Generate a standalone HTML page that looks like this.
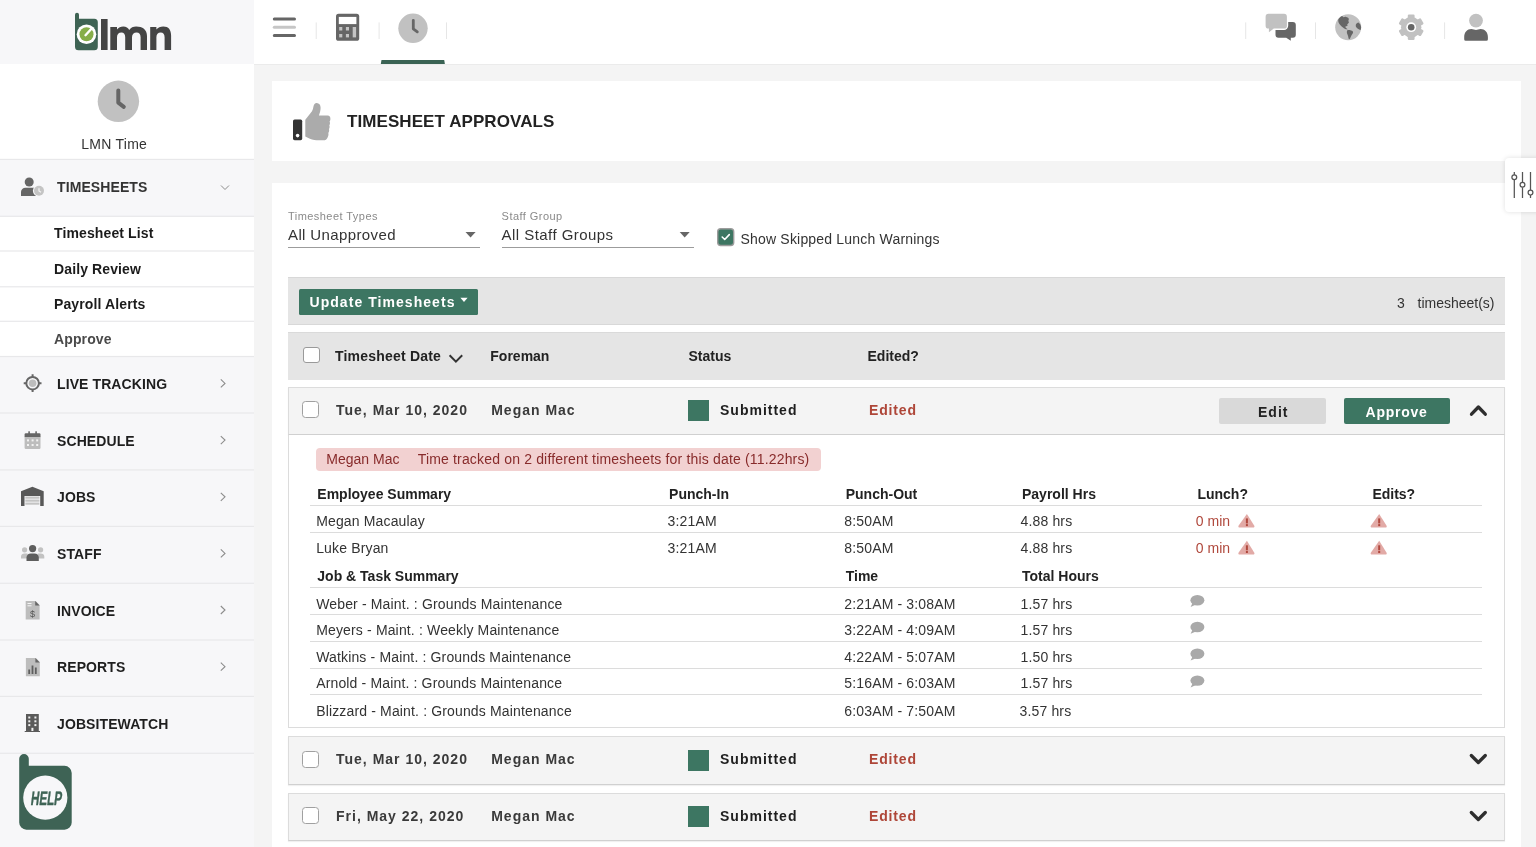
<!DOCTYPE html>
<html><head><meta charset="utf-8">
<style>
*{box-sizing:border-box;margin:0;padding:0}
html,body{width:1536px;height:847px;overflow:hidden;}
body{will-change:transform;background:#f4f4f4;font-family:"Liberation Sans",sans-serif;color:#333}
.a{position:absolute}
.t{position:absolute;white-space:nowrap;font-size:14px;line-height:16px}
.b{font-weight:bold}
#side{position:absolute;left:0;top:0;width:254px;height:847px;background:#f7f7f9}
.hr{position:absolute;left:0;width:255px;height:1px;background:#e6e6e8}
.nav{position:absolute;left:57px;font-size:14px;line-height:16px;font-weight:bold;color:#1e1e1e;white-space:nowrap;letter-spacing:0.1px}
.chev{position:absolute;left:219px;width:6px;height:6px;border-right:1.3px solid #9a9a9a;border-top:1.3px solid #9a9a9a;transform:rotate(45deg)}
.sub{position:absolute;left:54px;font-size:14px;line-height:16px;font-weight:bold;color:#1b1b1b;white-space:nowrap;letter-spacing:0.12px}
</style></head>
<body>
<!-- SIDEBAR -->
<div id="side">
  <div class="a" style="left:0;top:64px;width:254px;height:96px;background:#fff"></div>
  <div class="a" style="left:0;top:216px;width:254px;height:141px;background:#fff"></div>
  <svg class="a" style="left:0;top:0" width="255" height="847" viewBox="0 0 255 847">
    <!-- logo -->
    <path d="M77 12.8 a2 2 0 0 1 2 2 V18.7 H94.3 a3.5 3.5 0 0 1 3.5 3.5 V46.7 a3.5 3.5 0 0 1 -3.5 3.5 H78.5 a3.5 3.5 0 0 1 -3.5 -3.5 V14.8 a2 2 0 0 1 2 -2 Z" fill="#3e6354"/>
    <circle cx="86.5" cy="34.3" r="9.8" fill="#fff"/>
    <circle cx="86.5" cy="34.3" r="7" fill="#86ae4a"/>
    <path d="M85.5 35.2 L91.2 29" stroke="#fff" stroke-width="2.4" stroke-linecap="round"/>
    <rect x="101" y="19" width="6.6" height="31" fill="#444"/>
    <path d="M110.3 50 V27 H117 V29.6 C118.6 27.6 120.6 26.5 123.3 26.5 C126.2 26.5 128.1 28 129.2 30 C130.8 27.6 133.2 26.5 136.2 26.5 C142.5 26.5 147 29.5 147 36 V50 H140.6 V37.2 C140.6 34 139.2 32.4 136.6 32.4 C133.8 32.4 132 34.2 132 37.2 V50 H125.2 V37.2 C125.2 34 123.9 32.4 121.4 32.4 C118.7 32.4 117 34.2 117 37.2 V50 Z" fill="#444"/>
    <path d="M150.2 50 V27 H156.4 V29.6 C158 27.6 160.4 26.5 163.3 26.5 C168.6 26.5 171.1 29.8 171.1 35.5 V50 H164.6 V37.2 C164.6 34 163.2 32.4 160.7 32.4 C158 32.4 156.4 34.2 156.4 37.2 V50 Z" fill="#444"/>
    <!-- clock -->
    <circle cx="118.4" cy="101.3" r="20.7" fill="#c1c1c1"/>
    <path d="M118.3 90.5 V102.6 L123.8 106.8" stroke="#666" stroke-width="4" stroke-linecap="round" stroke-linejoin="round" fill="none"/>
    <!-- separators -->
    <rect x="0" y="158.8" width="254" height="1.2" fill="#e8e8ea"/>
    <rect x="0" y="215.7" width="254" height="1.2" fill="#e8e8ea"/>
    <rect x="0" y="250.4" width="254" height="1.2" fill="#e8e8ea"/>
    <rect x="0" y="286.2" width="254" height="1.2" fill="#e8e8ea"/>
    <rect x="0" y="320.7" width="254" height="1.2" fill="#e8e8ea"/>
    <rect x="0" y="355.9" width="254" height="1.2" fill="#e8e8ea"/>
    <rect x="0" y="412.4" width="254" height="1.2" fill="#e8e8ea"/>
    <rect x="0" y="469.3" width="254" height="1.2" fill="#e8e8ea"/>
    <rect x="0" y="525.8" width="254" height="1.2" fill="#e8e8ea"/>
    <rect x="0" y="582.7" width="254" height="1.2" fill="#e8e8ea"/>
    <rect x="0" y="639.4" width="254" height="1.2" fill="#e8e8ea"/>
    <rect x="0" y="695.8" width="254" height="1.2" fill="#e8e8ea"/>
    <rect x="0" y="752.7" width="254" height="1.2" fill="#e8e8ea"/>
    <!-- timesheets icon -->
    <circle cx="29.2" cy="182" r="4.5" fill="#666"/>
    <path d="M21 196 V192 C21 189.5 23 187.8 25.5 187.8 H33 C34.5 187.8 35.5 188.3 36 189 V196 Z" fill="#666"/>
    <circle cx="39" cy="190.8" r="6.1" fill="#f7f7f9"/>
    <circle cx="39" cy="190.8" r="5" fill="#c4c4c4"/>
    <path d="M39 188.3 V191 L41 192.3" stroke="#f5f5f5" stroke-width="1.2" fill="none"/>
    <path d="M221 185.5 L225 189.5 L229 185.5" stroke="#8c8c8c" stroke-width="1" fill="none"/>
    <!-- live tracking -->
    <circle cx="32.6" cy="383.2" r="6.3" stroke="#666" stroke-width="2" fill="none"/>
    <circle cx="32.6" cy="383.2" r="3.8" fill="#bdbdbd"/>
    <path d="M32.6 374.3 V377 M32.6 389.4 V392.1 M23.7 383.2 H26.4 M38.8 383.2 H41.5" stroke="#666" stroke-width="2"/>
    <!-- calendar -->
    <rect x="24.6" y="436" width="15.9" height="13" rx="1.2" fill="#bdbdbd"/>
    <path d="M24.6 437 V434.5 a1.2 1.2 0 0 1 1.2 -1.2 H39.3 a1.2 1.2 0 0 1 1.2 1.2 V437 Z" fill="#666"/>
    <rect x="28.3" y="431.3" width="1.6" height="3.6" fill="#666"/>
    <rect x="35.3" y="431.3" width="1.6" height="3.6" fill="#666"/>
    <g fill="#f2f2f2"><rect x="27" y="439.4" width="2" height="2"/><rect x="31.6" y="439.4" width="2" height="2"/><rect x="36.2" y="439.4" width="2" height="2"/><rect x="27" y="444" width="2" height="2"/><rect x="31.6" y="444" width="2" height="2"/><rect x="36.2" y="444" width="2" height="2"/></g>
    <!-- jobs garage -->
    <path d="M21 506 V491.3 L32.4 486.8 L43.7 491.3 V506 H40.2 V496 H24.5 V506 Z" fill="#585858"/>
    <g fill="#c4c4c4"><rect x="25.3" y="496.6" width="14.1" height="2.1"/><rect x="25.3" y="499.6" width="14.1" height="2.1"/><rect x="25.3" y="502.6" width="14.1" height="2.1"/></g>
    <!-- staff -->
    <circle cx="24.6" cy="549.8" r="2.6" fill="#c2c2c2"/>
    <circle cx="40.6" cy="549.8" r="2.6" fill="#c2c2c2"/>
    <path d="M21 558.5 V556.5 C21 554.5 22.5 553.5 24.5 553.5 H27.5 V558.5 Z M44.3 558.5 V556.5 C44.3 554.5 42.8 553.5 40.8 553.5 H37.8 V558.5 Z" fill="#c2c2c2"/>
    <circle cx="32.6" cy="548.6" r="3.6" fill="#5e5e5e"/>
    <path d="M26.5 561 V557.5 C26.5 555 28.3 553.4 30.8 553.4 H34.5 C37 553.4 38.8 555 38.8 557.5 V561 Z" fill="#5e5e5e"/>
    <!-- invoice -->
    <path d="M25.7 601 H35.7 L39.6 604.9 V619.4 H25.7 Z" fill="#bdbdbd"/>
    <path d="M35.2 601 L39.6 605.4 H35.2 Z" fill="#666"/>
    <rect x="27.5" y="603" width="4" height="1" fill="#f5f5f5"/><rect x="27.5" y="605.3" width="4" height="1" fill="#f5f5f5"/>
    <text x="32.6" y="616.5" font-family="Liberation Sans" font-size="9" fill="#555" text-anchor="middle">$</text>
    <!-- reports -->
    <path d="M25.9 658 H35.9 L39.8 661.9 V676.2 H25.9 Z" fill="#bdbdbd"/>
    <path d="M35.4 658 L39.8 662.4 H35.4 Z" fill="#666"/>
    <g fill="#5e5e5e"><rect x="28.3" y="669.5" width="1.8" height="4.5"/><rect x="31.6" y="665.5" width="1.8" height="8.5"/><rect x="34.9" y="667.5" width="1.8" height="6.5"/></g>
    <!-- building -->
    <path d="M24.7 732 V731 H26 V714 H38.8 V731 H40 V732 Z" fill="#5a5a5a"/>
    <g fill="#f0f0f0"><rect x="28.3" y="716.5" width="2" height="2"/><rect x="34.4" y="716.5" width="2" height="2"/><rect x="28.3" y="720.3" width="2" height="2"/><rect x="34.4" y="720.3" width="2" height="2"/><rect x="28.3" y="724.1" width="2" height="2"/><rect x="34.4" y="724.1" width="2" height="2"/><rect x="31.4" y="727.8" width="2" height="3.2"/></g>
    <!-- chevrons -->
    <g stroke="#8c8c8c" stroke-width="1.1" fill="none">
      <path d="M220.8 379.4 L225 383.4 L220.8 387.4"/>
      <path d="M220.8 436.1 L225 440.1 L220.8 444.1"/>
      <path d="M220.8 492.8 L225 496.8 L220.8 500.8"/>
      <path d="M220.8 549.4 L225 553.4 L220.8 557.4"/>
      <path d="M220.8 606.0 L225 610.0 L220.8 614.0"/>
      <path d="M220.8 662.7 L225 666.7 L220.8 670.7"/>
    </g>
    <!-- help -->
    <path d="M24 754 a4.8 4.8 0 0 1 4.8 4.8 V765.8 H64.5 a7.2 7.2 0 0 1 7.2 7.2 V822.5 a7.2 7.2 0 0 1 -7.2 7.2 H26.4 a7.2 7.2 0 0 1 -7.2 -7.2 V758.8 a4.8 4.8 0 0 1 4.8 -4.8 Z" fill="#3e6355"/>
    <circle cx="45.3" cy="797.7" r="22.1" fill="#f7f7f9"/>
    <text x="0" y="0" transform="translate(45.8 805.3) scale(0.6 1) skewX(-12)" font-family="Liberation Sans" font-weight="bold" font-size="19.5" fill="#3e6355" stroke="#3e6355" stroke-width="0.4" text-anchor="middle">HELP</text>
  </svg>
  <div class="t" style="left:81.3px;top:135.8px;color:#333;letter-spacing:0.25px">LMN Time</div>
  <div class="nav" style="top:179px;color:#333">TIMESHEETS</div>
  <div class="sub" style="top:225px">Timesheet List</div>
  <div class="sub" style="top:261px">Daily Review</div>
  <div class="sub" style="top:296px">Payroll Alerts</div>
  <div class="sub" style="top:331px;color:#4a4a4a">Approve</div>
  <div class="nav" style="top:376px">LIVE TRACKING</div>
  <div class="nav" style="top:433px">SCHEDULE</div>
  <div class="nav" style="top:489px">JOBS</div>
  <div class="nav" style="top:546px">STAFF</div>
  <div class="nav" style="top:603px">INVOICE</div>
  <div class="nav" style="top:659px">REPORTS</div>
  <div class="nav" style="top:716px">JOBSITEWATCH</div>
</div>

<!-- TOPBAR -->
<div class="a" style="left:254px;top:0;width:1282px;height:64px;background:#fff"></div>
<div class="a" style="left:254px;top:64px;width:1282px;height:1.2px;background:#ebebeb"></div>
<svg class="a" style="left:0;top:0" width="1536" height="64" viewBox="0 0 1536 64">
  <g stroke-linecap="round" stroke-width="3">
    <path d="M274.3 18.9 H294.5 M274.3 35.5 H294.5" stroke="#666"/>
    <path d="M274.3 27.3 H294.5" stroke="#c6c6c6"/>
  </g>
  <g fill="#e6e6e6"><rect x="315.7" y="22.4" width="1" height="16.6"/><rect x="378.6" y="22.4" width="1" height="16.6"/><rect x="446" y="22.4" width="1" height="16.6"/>
  <rect x="1245.2" y="22.4" width="1" height="16.6"/><rect x="1315" y="22.4" width="1" height="16.6"/><rect x="1444.1" y="22.4" width="1" height="16.6"/></g>
  <rect x="336" y="13.7" width="23.2" height="27.1" rx="2.6" fill="#666"/>
  <rect x="338.8" y="16.9" width="17.6" height="7.2" fill="#fff"/>
  <g fill="#c4c4c4"><rect x="339.2" y="27" width="3.1" height="3.5"/><rect x="345.9" y="27" width="3.1" height="3.5"/><rect x="339.2" y="34" width="3.1" height="3.4"/><rect x="345.9" y="34" width="3.1" height="3.4"/><rect x="352.7" y="27" width="3.4" height="10.4"/></g>
  <circle cx="413" cy="28.3" r="14.7" fill="#c1c1c1"/>
  <path d="M413.3 20.3 V28.8 L417.3 31.8" stroke="#666" stroke-width="2.8" stroke-linecap="round" stroke-linejoin="round" fill="none"/>
  <path d="M381.5 59.9 H444.2 L444.9 64 H380.8 Z" fill="#3a6354"/>
  <!-- chat -->
  <path d="M1278.5 22 H1292.8 a3 3 0 0 1 3 3 V34.8 a3 3 0 0 1 -3 3 H1290.8 V40.8 L1286.2 37.8 H1278.5 a3 3 0 0 1 -3 -3 V25 a3 3 0 0 1 3 -3 Z" fill="#666"/>
  <path d="M1268.5 13.8 H1284 a2.9 2.9 0 0 1 2.9 2.9 V25.7 a2.9 2.9 0 0 1 -2.9 2.9 H1273.8 L1268.9 32.2 V28.6 H1268.5 a2.9 2.9 0 0 1 -2.9 -2.9 V16.7 a2.9 2.9 0 0 1 2.9 -2.9 Z" fill="#c1c1c1" stroke="#fff" stroke-width="2.6" paint-order="stroke"/>
  <!-- globe -->
  <circle cx="1348.2" cy="27.2" r="13" fill="#c1c1c1"/>
  <path d="M1338.3 19.5 C1339 17.8 1340.5 16.5 1342.2 15.9 L1343.5 17.2 C1344.5 16.8 1345.5 16.5 1346.3 17 L1347.5 17.5 C1348.5 17.8 1349.2 18.8 1348.7 19.8 L1348.3 21 L1349 22.3 C1348.5 23.3 1347.8 24 1347.2 24.5 L1347.6 25.8 C1346.6 26.2 1345.8 26.3 1345.2 26.8 C1345.6 27.8 1346.5 28.6 1347.8 29.3 C1346 29.6 1344.3 28.8 1343 27.6 C1341.2 26 1339.5 24.5 1338.6 22.5 C1338.2 21.5 1338.1 20.5 1338.3 19.5 Z" fill="#666"/>
  <path d="M1347.3 30.2 C1349.2 29.7 1351.5 30.3 1352.9 31.4 C1353.4 32.6 1352.6 33.8 1351.8 34.8 C1351 36 1350.6 37.5 1349.9 38.8 C1349.4 39.3 1348.9 39.3 1348.6 38.6 C1348.3 37 1348 35.5 1347.4 34.2 C1346.8 33 1346.6 31.3 1347.3 30.2 Z" fill="#666"/>
  <path d="M1358.5 22.4 C1360 23.3 1361 25.5 1361.1 27.3 C1361.1 28.5 1360.9 29.4 1360.6 30 C1359.5 29.8 1358 29 1357 28 C1355.9 27 1355.5 25.6 1355.9 24.4 C1356.4 23.3 1357.4 22.6 1358.5 22.4 Z" fill="#666"/>
  <!-- gear -->
  <g transform="translate(1411.2 27.2)" fill="#c1c1c1">
    <circle r="10.2"/>
    <rect x="-3.4" y="-12.7" width="6.8" height="5" rx="1.2" transform="rotate(0)"/><rect x="-3.4" y="-12.7" width="6.8" height="5" rx="1.2" transform="rotate(60)"/><rect x="-3.4" y="-12.7" width="6.8" height="5" rx="1.2" transform="rotate(120)"/><rect x="-3.4" y="-12.7" width="6.8" height="5" rx="1.2" transform="rotate(180)"/><rect x="-3.4" y="-12.7" width="6.8" height="5" rx="1.2" transform="rotate(240)"/><rect x="-3.4" y="-12.7" width="6.8" height="5" rx="1.2" transform="rotate(300)"/>
    <circle r="4.9" fill="#fff"/>
    <circle r="3.3" fill="#666"/>
  </g>
  <!-- user -->
  <circle cx="1476" cy="20.6" r="6.9" fill="#c1c1c1"/>
  <path d="M1464.2 39.3 V37 C1464.2 32.3 1467.3 29.1 1471.3 29.1 C1473.3 29.1 1474.6 29.9 1476 29.9 C1477.4 29.9 1478.7 29.1 1480.7 29.1 C1484.7 29.1 1487.9 32.3 1487.9 37 V39.3 a1.5 1.5 0 0 1 -1.5 1.5 H1465.7 a1.5 1.5 0 0 1 -1.5 -1.5 Z" fill="#666"/>
</svg>

<!-- CARD 1 -->
<div class="a" style="left:272px;top:81px;width:1249px;height:80px;background:#fff"></div>
<svg class="a" style="left:280px;top:95px" width="60" height="55" viewBox="280 95 60 55">
  <path d="M305.3 119.8 L311.8 111.6 C312.6 110.4 313 108.8 313.4 106.8 C313.8 104.4 315 103 316.8 103.1 C319 103.2 320.6 105 320.6 107.8 C320.6 110.5 319.8 113 318.9 115.6 H327.6 C329.6 115.6 330.5 117.2 330.4 119 C330.4 120.2 330 121 329.6 121.6 C330.2 122.6 330.1 124.5 329.3 125.3 C329.8 126.4 329.7 128.3 328.9 129.1 C329.4 130.2 329.2 132.2 328.3 133 C328.7 134.2 328.4 136.2 327.6 137.4 C326.8 139.3 325.4 140.3 323.5 140.3 H316.5 C313.5 140.3 310.5 139.2 307.8 137.8 L305.3 136.6 Z" fill="#ababab"/>
  <rect x="293" y="119.6" width="9.2" height="20.6" rx="1.6" fill="#333"/>
  <circle cx="297.6" cy="135.6" r="1.8" fill="#fff"/>
</svg>
<div class="t b" style="left:347px;top:112.3px;font-size:17px;line-height:20px;color:#222;letter-spacing:0.08px">TIMESHEET APPROVALS</div>
<!-- CARD 2 -->
<div class="a" style="left:272px;top:183px;width:1249px;height:700px;background:#fff"></div>
<!-- filter tab -->
<div class="a" style="left:1505px;top:158.3px;width:40px;height:53.4px;background:#fff;border-radius:4px 0 0 4px;box-shadow:0 0 5px rgba(0,0,0,0.13)"></div>
<svg class="a" style="left:1505px;top:158px" width="31" height="54" viewBox="1505 158 31 54">
  <g stroke="#555" stroke-width="1.25" fill="none">
    <path d="M1514.3 172 V175 M1514.3 179.6 V198"/>
    <path d="M1522.5 172 V182.4 M1522.5 187.2 V198"/>
    <path d="M1530.5 172 V190.2 M1530.5 195 V198"/>
    <circle cx="1514.3" cy="177.3" r="2.4" fill="#fff"/>
    <circle cx="1522.5" cy="184.8" r="2.4" fill="#fff"/>
    <circle cx="1530.5" cy="192.6" r="2.4" fill="#fff"/>
  </g>
</svg>
<!-- filters -->
<div class="t" style="left:288px;top:210.3px;font-size:11px;line-height:13px;color:#8a8a8a;letter-spacing:0.45px">Timesheet Types</div>
<div class="t" style="left:288px;top:226px;font-size:15px;line-height:17px;color:#333;letter-spacing:0.38px">All Unapproved</div>
<div class="a" style="left:288px;top:246.6px;width:192px;height:1.4px;background:#9c9c9c"></div>
<div class="t" style="left:501.6px;top:210.3px;font-size:11px;line-height:13px;color:#8a8a8a;letter-spacing:0.45px">Staff Group</div>
<div class="t" style="left:501.6px;top:226px;font-size:15px;line-height:17px;color:#333;letter-spacing:0.45px">All Staff Groups</div>
<div class="a" style="left:502px;top:246.6px;width:192px;height:1.4px;background:#9c9c9c"></div>
<svg class="a" style="left:0;top:0" width="1536" height="847" viewBox="0 0 1536 847">
  <path d="M465.5 232 H475.6 L470.55 237.6 Z" fill="#666"/>
  <path d="M679.7 232 H689.7 L684.7 237.6 Z" fill="#666"/>
  <rect x="717.7" y="228.7" width="16" height="16.8" rx="3" fill="#3d7662" stroke="#9c9c9c" stroke-width="1.4"/>
  <path d="M722.2 237 L724.7 239.5 L729.3 234.6" stroke="#fff" stroke-width="1.6" fill="none" stroke-linecap="round" stroke-linejoin="round"/>
</svg>
<div class="t" style="left:740.5px;top:231px;color:#333;letter-spacing:0.19px">Show Skipped Lunch Warnings</div>

<!-- toolbar -->
<div class="a" style="left:288px;top:276.6px;width:1217px;height:48.6px;background:#e5e5e5;border-top:1px solid #d8d8d8;border-bottom:1px solid #d8d8d8"></div>
<div class="a" style="left:298.5px;top:288.6px;width:179.5px;height:26.7px;background:#3d7662;border-radius:1.5px"></div>
<div class="t b" style="left:309.5px;top:294.4px;color:#fff;letter-spacing:1.05px">Update Timesheets</div>
<svg class="a" style="left:455px;top:290px" width="20" height="20" viewBox="455 290 20 20"><path d="M460.4 297.8 H467.6 L464 302 Z" fill="#fff"/></svg>
<div class="t" style="left:1397px;top:294.9px;color:#333">3</div>
<div class="t" style="left:1417.5px;top:294.9px;color:#333">timesheet(s)</div>

<!-- header row -->
<div class="a" style="left:288px;top:331.6px;width:1217px;height:48px;background:#e5e5e5;border-top:1px solid #dadada"></div>
<div class="a" style="left:303.2px;top:346.6px;width:16.4px;height:16.8px;background:#fff;border:1px solid #9a9a9a;border-radius:3px"></div>
<div class="t b" style="left:335px;top:347.7px;color:#222;letter-spacing:0.2px">Timesheet Date</div>
<svg class="a" style="left:445px;top:350px" width="20" height="16" viewBox="445 350 20 16"><path d="M449.6 355.3 L455.9 361.6 L462.2 355.3" stroke="#333" stroke-width="2" fill="none"/></svg>
<div class="t b" style="left:490.3px;top:347.7px;color:#222">Foreman</div>
<div class="t b" style="left:688.5px;top:347.7px;color:#222">Status</div>
<div class="t b" style="left:867.5px;top:347.7px;color:#222">Edited?</div>

<!-- rows -->
<div class="a" style="left:288px;top:386.5px;width:1217px;height:48.4px;background:#f4f4f4;border:1px solid #dcdcdc;border-bottom-color:#d0d0d0;box-shadow:0 1px 1px rgba(0,0,0,0.06)"></div>
<div class="a" style="left:301.9px;top:400.7px;width:16.9px;height:17.2px;background:#fff;border:1px solid #a0a0a0;border-radius:3.5px"></div>
<div class="t b" style="left:336px;top:401.5px;color:#3a3a3a;letter-spacing:1px">Tue, Mar 10, 2020</div>
<div class="t b" style="left:491.2px;top:401.5px;color:#3a3a3a;letter-spacing:1px">Megan Mac</div>
<div class="a" style="left:688.1px;top:400.0px;width:21px;height:21px;background:#3d7662"></div>
<div class="t b" style="left:720px;top:401.5px;color:#1e1e1e;letter-spacing:1px">Submitted</div>
<div class="t b" style="left:869px;top:401.5px;color:#ae4638;letter-spacing:0.85px">Edited</div>
<div class="a" style="left:1219.4px;top:398.1px;width:106.6px;height:26.3px;background:#d9d9d9;border-radius:2px"></div>
<div class="t b" style="left:1258px;top:403.8px;color:#222;letter-spacing:1px">Edit</div>
<div class="a" style="left:1343.7px;top:398.1px;width:106.3px;height:26.3px;background:#3d7662;border-radius:2px"></div>
<div class="t b" style="left:1365.6px;top:403.8px;color:#fff;letter-spacing:0.75px">Approve</div>
<svg class="a" style="left:1465px;top:398.5px" width="28" height="20" viewBox="1465 398.5 28 20"><path d="M1471.5 413.7 L1478.4 406.5 L1485.3 413.7" stroke="#2e2e2e" stroke-width="3.3" fill="none" stroke-linecap="round" stroke-linejoin="round"/></svg>
<div class="a" style="left:288px;top:434.9px;width:1217px;height:293px;background:#fff;border:1px solid #dcdcdc;border-top:none"></div>
<div class="a" style="left:315.7px;top:447.8px;width:505.5px;height:22.8px;background:#f2d1d1;border-radius:4px"></div>
<div class="t" style="left:326.3px;top:451px;color:#882b2b">Megan Mac</div>
<div class="t" style="left:417.7px;top:451px;color:#882b2b;letter-spacing:0.17px">Time tracked on 2 different timesheets for this date (11.22hrs)</div>
<div class="t b" style="left:317.3px;top:485.65px;color:#222">Employee Summary</div>
<div class="t b" style="left:669.1px;top:485.65px;color:#222">Punch-In</div>
<div class="t b" style="left:845.7px;top:485.65px;color:#222">Punch-Out</div>
<div class="t b" style="left:1022.0px;top:485.65px;color:#222">Payroll Hrs</div>
<div class="t b" style="left:1197.4px;top:485.65px;color:#222">Lunch?</div>
<div class="t b" style="left:1372.4px;top:485.65px;color:#222">Edits?</div>
<div class="a" style="left:310px;top:505px;width:1172px;height:1px;background:#dcdcdc"></div>
<div class="t" style="left:316.2px;top:513px;color:#333;letter-spacing:0.15px">Megan Macaulay</div>
<div class="t" style="left:667.6px;top:513px;color:#333;letter-spacing:0.15px">3:21AM</div>
<div class="t" style="left:844.3px;top:513px;color:#333;letter-spacing:0.15px">8:50AM</div>
<div class="t" style="left:1020.5px;top:513px;color:#333;letter-spacing:0.15px">4.88 hrs</div>
<div class="t" style="left:1195.8px;top:513px;color:#b0483c">0 min</div>
<div class="t" style="left:316.2px;top:540.15px;color:#333;letter-spacing:0.15px">Luke Bryan</div>
<div class="t" style="left:667.6px;top:540.15px;color:#333;letter-spacing:0.15px">3:21AM</div>
<div class="t" style="left:844.3px;top:540.15px;color:#333;letter-spacing:0.15px">8:50AM</div>
<div class="t" style="left:1020.5px;top:540.15px;color:#333;letter-spacing:0.15px">4.88 hrs</div>
<div class="t" style="left:1195.8px;top:540.15px;color:#b0483c">0 min</div>
<div class="a" style="left:310px;top:532px;width:1172px;height:1px;background:#dcdcdc"></div>
<div class="t b" style="left:317.3px;top:567.95px;color:#222">Job &amp; Task Summary</div>
<div class="t b" style="left:845.7px;top:567.95px;color:#222">Time</div>
<div class="t b" style="left:1022.0px;top:567.95px;color:#222">Total Hours</div>
<div class="a" style="left:310px;top:587px;width:1172px;height:1px;background:#dcdcdc"></div>
<div class="t" style="left:316.2px;top:595.55px;color:#333;letter-spacing:0.15px">Weber - Maint. : Grounds Maintenance</div>
<div class="t" style="left:844.3px;top:595.55px;color:#333;letter-spacing:0.15px">2:21AM - 3:08AM</div>
<div class="t" style="left:1020.5px;top:595.55px;color:#333;letter-spacing:0.15px">1.57 hrs</div>
<div class="t" style="left:316.2px;top:622.15px;color:#333;letter-spacing:0.15px">Meyers - Maint. : Weekly Maintenance</div>
<div class="t" style="left:844.3px;top:622.15px;color:#333;letter-spacing:0.15px">3:22AM - 4:09AM</div>
<div class="t" style="left:1020.5px;top:622.15px;color:#333;letter-spacing:0.15px">1.57 hrs</div>
<div class="t" style="left:316.2px;top:648.95px;color:#333;letter-spacing:0.15px">Watkins - Maint. : Grounds Maintenance</div>
<div class="t" style="left:844.3px;top:648.95px;color:#333;letter-spacing:0.15px">4:22AM - 5:07AM</div>
<div class="t" style="left:1020.5px;top:648.95px;color:#333;letter-spacing:0.15px">1.50 hrs</div>
<div class="t" style="left:316.2px;top:675.35px;color:#333;letter-spacing:0.15px">Arnold - Maint. : Grounds Maintenance</div>
<div class="t" style="left:844.3px;top:675.35px;color:#333;letter-spacing:0.15px">5:16AM - 6:03AM</div>
<div class="t" style="left:1020.5px;top:675.35px;color:#333;letter-spacing:0.15px">1.57 hrs</div>
<div class="t" style="left:316.2px;top:702.6px;color:#333;letter-spacing:0.15px">Blizzard - Maint. : Grounds Maintenance</div>
<div class="t" style="left:844.3px;top:702.6px;color:#333;letter-spacing:0.15px">6:03AM - 7:50AM</div>
<div class="t" style="left:1019.5px;top:702.6px;color:#333;letter-spacing:0.15px">3.57 hrs</div>
<div class="a" style="left:310px;top:614px;width:1172px;height:1px;background:#dcdcdc"></div>
<div class="a" style="left:310px;top:641px;width:1172px;height:1px;background:#dcdcdc"></div>
<div class="a" style="left:310px;top:668px;width:1172px;height:1px;background:#dcdcdc"></div>
<div class="a" style="left:310px;top:694px;width:1172px;height:1px;background:#dcdcdc"></div>
<svg class="a" style="left:0;top:0" width="1536" height="847" viewBox="0 0 1536 847">
<path d="M1246.9 513.9 L1254.3 525.8 a1.2 1.2 0 0 1 -1 1.8 H1239.5 a1.2 1.2 0 0 1 -1 -1.8 Z" fill="#e2aaa6"/><rect x="1245.9" y="518.4" width="2" height="5" fill="#b0483c"/><rect x="1245.9" y="524.1" width="2" height="2" fill="#b0483c"/>
<path d="M1379.2 513.9 L1386.6 525.8 a1.2 1.2 0 0 1 -1 1.8 H1371.8 a1.2 1.2 0 0 1 -1 -1.8 Z" fill="#e2aaa6"/><rect x="1378.2" y="518.4" width="2" height="5" fill="#b0483c"/><rect x="1378.2" y="524.1" width="2" height="2" fill="#b0483c"/>
<path d="M1246.9 540.8 L1254.3 552.7 a1.2 1.2 0 0 1 -1 1.8 H1239.5 a1.2 1.2 0 0 1 -1 -1.8 Z" fill="#e2aaa6"/><rect x="1245.9" y="545.3" width="2" height="5" fill="#b0483c"/><rect x="1245.9" y="551.0" width="2" height="2" fill="#b0483c"/>
<path d="M1379.2 540.8 L1386.6 552.7 a1.2 1.2 0 0 1 -1 1.8 H1371.8 a1.2 1.2 0 0 1 -1 -1.8 Z" fill="#e2aaa6"/><rect x="1378.2" y="545.3" width="2" height="5" fill="#b0483c"/><rect x="1378.2" y="551.0" width="2" height="2" fill="#b0483c"/>
<ellipse cx="1197.4" cy="600.2" rx="7" ry="5.2" fill="#a9a9a9"/><path d="M1192.5 603.0 L1190.6 607.0 L1196 604.6 Z" fill="#a9a9a9"/>
<ellipse cx="1197.4" cy="627.0" rx="7" ry="5.2" fill="#a9a9a9"/><path d="M1192.5 629.8 L1190.6 633.8 L1196 631.4 Z" fill="#a9a9a9"/>
<ellipse cx="1197.4" cy="653.8" rx="7" ry="5.2" fill="#a9a9a9"/><path d="M1192.5 656.6 L1190.6 660.6 L1196 658.2 Z" fill="#a9a9a9"/>
<ellipse cx="1197.4" cy="680.6" rx="7" ry="5.2" fill="#a9a9a9"/><path d="M1192.5 683.4 L1190.6 687.4 L1196 685.0 Z" fill="#a9a9a9"/>
</svg>
<div class="a" style="left:288px;top:736.4px;width:1217px;height:48.4px;background:#f4f4f4;border:1px solid #dcdcdc;border-bottom-color:#d0d0d0;box-shadow:0 1px 1px rgba(0,0,0,0.06)"></div>
<div class="a" style="left:301.9px;top:750.6px;width:16.9px;height:17.2px;background:#fff;border:1px solid #a0a0a0;border-radius:3.5px"></div>
<div class="t b" style="left:336px;top:751.4px;color:#3a3a3a;letter-spacing:1px">Tue, Mar 10, 2020</div>
<div class="t b" style="left:491.2px;top:751.4px;color:#3a3a3a;letter-spacing:1px">Megan Mac</div>
<div class="a" style="left:688.1px;top:749.9px;width:21px;height:21px;background:#3d7662"></div>
<div class="t b" style="left:720px;top:751.4px;color:#1e1e1e;letter-spacing:1px">Submitted</div>
<div class="t b" style="left:869px;top:751.4px;color:#ae4638;letter-spacing:0.85px">Edited</div>
<svg class="a" style="left:1465px;top:748.4px" width="28" height="20" viewBox="1465 748.4 28 20"><path d="M1471.3 755.9 L1478.3 762.9 L1485.3 755.9" stroke="#2e2e2e" stroke-width="3.3" fill="none" stroke-linecap="round" stroke-linejoin="round"/></svg>
<div class="a" style="left:288px;top:792.6px;width:1217px;height:48.4px;background:#f4f4f4;border:1px solid #dcdcdc;border-bottom-color:#d0d0d0;box-shadow:0 1px 1px rgba(0,0,0,0.06)"></div>
<div class="a" style="left:301.9px;top:806.8px;width:16.9px;height:17.2px;background:#fff;border:1px solid #a0a0a0;border-radius:3.5px"></div>
<div class="t b" style="left:336px;top:807.6px;color:#3a3a3a;letter-spacing:1px">Fri, May 22, 2020</div>
<div class="t b" style="left:491.2px;top:807.6px;color:#3a3a3a;letter-spacing:1px">Megan Mac</div>
<div class="a" style="left:688.1px;top:806.1px;width:21px;height:21px;background:#3d7662"></div>
<div class="t b" style="left:720px;top:807.6px;color:#1e1e1e;letter-spacing:1px">Submitted</div>
<div class="t b" style="left:869px;top:807.6px;color:#ae4638;letter-spacing:0.85px">Edited</div>
<svg class="a" style="left:1465px;top:804.6px" width="28" height="20" viewBox="1465 804.6 28 20"><path d="M1471.3 812.1 L1478.3 819.1 L1485.3 812.1" stroke="#2e2e2e" stroke-width="3.3" fill="none" stroke-linecap="round" stroke-linejoin="round"/></svg>
</body></html>
